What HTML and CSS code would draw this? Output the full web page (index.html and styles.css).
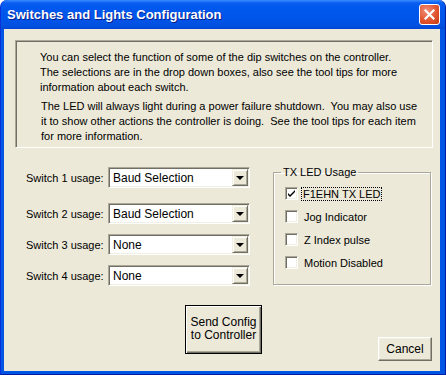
FILE: index.html
```html
<!DOCTYPE html>
<html lang="en">
<head>
    <meta charset="UTF-8">
    <title>Switches and Lights Configuration</title>
    <link rel="stylesheet" href="styles.css">
</head>
<body>
<div class="window">
    <div class="titlebar">
        <span class="title">Switches and Lights Configuration</span>
        <span class="close">
            <svg width="11" height="11" viewBox="0 0 11 11"><path d="M1.5 1.5 L9.5 9.5 M9.5 1.5 L1.5 9.5" stroke="#fff" stroke-width="2.2" stroke-linecap="square"/></svg>
        </span>
    </div>
    <div class="client">
        <div class="info">
            <p>You can select the function of some of the dip switches on the controller.<br>
            The selections are in the drop down boxes, also see the tool tips for more<br>
            information about each switch.</p>
            <p class="second">The LED will always light during a power failure shutdown.&nbsp; You may also use<br>
            it to show other actions the controller is doing.&nbsp; See the tool tips for each item<br>
            for more information.</p>
        </div>
        <div class="middle">
            <div class="switches">
                <div class="row">
                    <span class="lbl">Switch 1 usage:</span>
                    <div class="combo"><span class="val">Baud Selection</span><span class="arrow"></span></div>
                </div>
                <div class="row row2">
                    <span class="lbl">Switch 2 usage:</span>
                    <div class="combo"><span class="val">Baud Selection</span><span class="arrow"></span></div>
                </div>
                <div class="row">
                    <span class="lbl">Switch 3 usage:</span>
                    <div class="combo"><span class="val">None</span><span class="arrow"></span></div>
                </div>
                <div class="row">
                    <span class="lbl">Switch 4 usage:</span>
                    <div class="combo"><span class="val">None</span><span class="arrow"></span></div>
                </div>
            </div>
            <fieldset class="group">
                <legend>TX LED Usage</legend>
                <div class="check"><span class="box checked">
                    <svg width="7" height="7" viewBox="0 0 7 7"><path d="M0 3 L0 5 L2 7 L7 2 L7 0 L2 5 Z" fill="#000"/></svg>
                </span><span class="focus">F1EHN TX LED</span></div>
                <div class="check"><span class="box"></span><span class="txt">Jog Indicator</span></div>
                <div class="check"><span class="box"></span><span class="txt">Z Index pulse</span></div>
                <div class="check"><span class="box"></span><span class="txt">Motion Disabled</span></div>
            </fieldset>
        </div>
        <div class="actions">
            <div class="btn default">Send Config<br>to Controller</div>
            <div class="btn cancel">Cancel</div>
        </div>
    </div>
</div>
</body>
</html>
```

FILE: styles.css
```css
*{
    margin:0;
    padding:0;
    box-sizing: border-box;
}
html,body{
    width:446px;
    height:375px;
    overflow: hidden;
    background: #fff;
}
body{
    font-family: "Liberation Sans", Arial, sans-serif;
    font-size: 11px;
    color: #000;
}
.window{
    width:446px;
    height:375px;
    display: flex;
    flex-direction: column;
    background: #0055e5;
    border-radius: 7px 7px 0 0;
    border-left: 1px solid #0831d9;
    border-right: 1px solid #001ea0;
    border-bottom: 1px solid #001ea0;
}
.titlebar{
    height:29px;
    display: flex;
    align-items: center;
    justify-content: space-between;
    padding: 0 5px 1px 6px;
    border-radius: 7px 7px 0 0;
    background: linear-gradient(#3b8cff 0, #0a5ef0 3px, #0058ee 8px, #0055e9 18px, #0150e0 26px, #0046d3 29px);
}
.title{
    color: #fff;
    font-weight: bold;
    font-size: 13px;
    text-shadow: 1px 1px 0 #0a1e8c;
}
.close{
    width:21px;
    height:21px;
    display: flex;
    align-items: center;
    justify-content: center;
    border: 1px solid #fff;
    border-radius: 3px;
    background: radial-gradient(circle at 35% 30%, #f0907a 0, #e2552f 55%, #c23b12 100%);
}
.client{
    flex: 1;
    margin: 0 5px 3px 3px;
    background: #ece9d8;
    display: flex;
    flex-direction: column;
}
.info{
    margin: 11px 7px 0 11px;
    height: 108px;
    padding: 9px 0 0 24px;
    border: 1px solid;
    border-color: #aca899 #fff #fff #aca899;
    box-shadow: inset 1px 1px 0 #716f64;
    line-height: 15px;
}
.info .second{
    margin-top: 4px;
    padding-left: 1px;
}
.middle{
    display: flex;
    justify-content: space-between;
    padding: 0 9px 0 22px;
    margin-top: 18px;
}
.switches{
    display: flex;
    flex-direction: column;
    padding-top: 1px;
}
.row{
    display: flex;
    align-items: center;
    margin-top: 10px;
}
.row:first-child{
    margin-top: 0;
}
.row2{
    margin-top: 15px;
}
.lbl{
    width: 82px;
    padding-top: 1px;
}
.combo{
    width: 142px;
    height: 21px;
    display: flex;
    align-items: center;
    justify-content: space-between;
    padding: 0 1px 0 4px;
    background: #fff;
    border: 1px solid;
    border-color: #aca899 #fff #fff #aca899;
    box-shadow: inset 1px 1px 0 #716f64, inset -1px -1px 0 #f1efe2;
    font-size: 12px;
}
.arrow{
    width: 16px;
    height: 17px;
    display: flex;
    align-items: center;
    justify-content: center;
    background: #ece9d8;
    border: 1px solid;
    border-color: #f1efe2 #716f64 #716f64 #f1efe2;
    box-shadow: inset 1px 1px 0 #fff, inset -1px -1px 0 #aca899;
}
.arrow::after{
    content: "";
    border-top: 4px solid #000;
    border-left: 4px solid transparent;
    border-right: 4px solid transparent;
    margin-top: 1px;
}
.group{
    width: 158px;
    height: 119px;
    border: 1px solid #aca899;
    box-shadow: inset 1px 1px 0 #fff, 1px 1px 0 #fff;
    padding: 8px 0 0 11px;
    margin-top: 0;
}
.group legend{
    margin-left: -4px;
    padding: 0 2px 0 2px;
    line-height: 13px;
}
.check{
    display: flex;
    align-items: center;
    height: 13px;
    margin-bottom: 10px;
}
.box{
    width: 13px;
    height: 13px;
    margin-right: 4px;
    display: flex;
    align-items: center;
    justify-content: center;
    background: #fff;
    border: 1px solid;
    border-color: #aca899 #fff #fff #aca899;
    box-shadow: inset 1px 1px 0 #716f64, inset -1px -1px 0 #f1efe2;
}
.txt{
    padding-left: 2px;
}
.focus{
    padding: 0 1px 0 1px;
    outline: 1px dotted #000;
    line-height: 12px;
}
.actions{
    flex: 1;
    display: grid;
    grid-template-columns: 1fr auto 1fr;
    padding: 19px 8px 10px 11px;
}
.btn{
    text-align: center;
    background: #ece9d8;
    border: 1px solid;
    border-color: #fff #716f64 #716f64 #fff;
    box-shadow: inset -1px -1px 0 #aca899, inset 1px 1px 0 #f1efe2;
}
.default{
    grid-column: 2;
    width: 77px;
    height: 49px;
    border: 1px solid #000;
    box-shadow: inset 1px 1px 0 #fff, inset -1px -1px 0 #716f64, inset -2px -2px 0 #aca899;
    padding-top: 10px;
    line-height: 13px;
    font-size: 12px;
}
.cancel{
    grid-column: 3;
    justify-self: end;
    align-self: end;
    width: 54px;
    height: 24px;
    line-height: 22px;
    font-size: 12px;
}
```
